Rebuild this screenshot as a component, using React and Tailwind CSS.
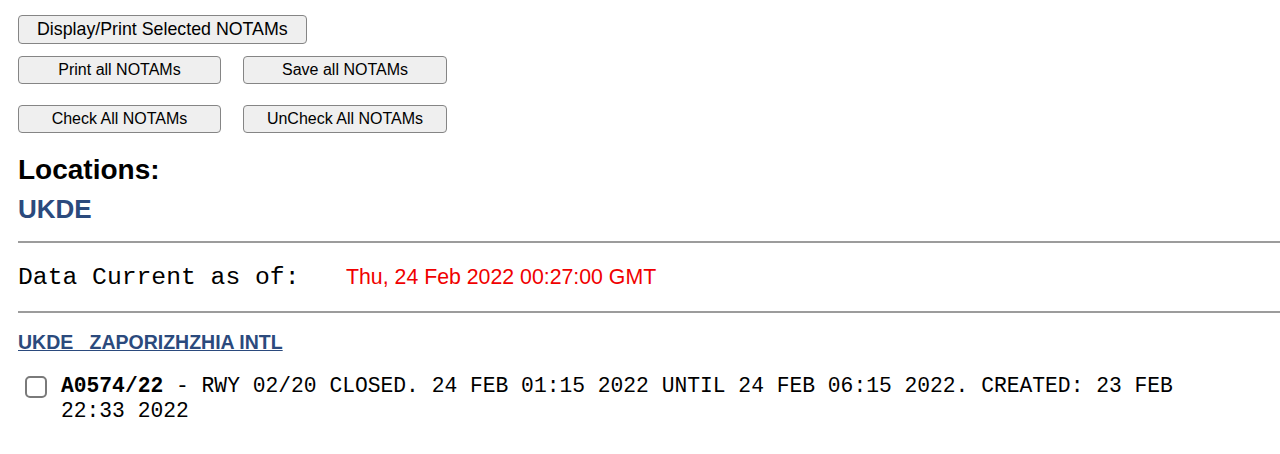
const Btn = ({ children, className = "" }) => (
  <button
    className={`h-[28px] rounded-[4px] border border-[#858585] bg-[#efefef] text-[16px] leading-none text-black ${className}`}
  >
    {children}
  </button>
);

const App = () => {
  return (
    <div className="min-h-[454px] bg-white pl-[18px] pt-[15px] font-['Liberation_Sans',Arial,sans-serif] text-black">
      {/* buttons */}
      <Btn className="h-[29px] px-[18px] text-[17.8px]">Display/Print Selected NOTAMs</Btn>
      <div className="mt-[12px] flex gap-[22px]">
        <Btn className="w-[203px]">Print all NOTAMs</Btn>
        <Btn className="w-[204px]">Save all NOTAMs</Btn>
      </div>
      <div className="mt-[21px] flex gap-[22px]">
        <Btn className="w-[203px]">Check All NOTAMs</Btn>
        <Btn className="w-[204px]">UnCheck All NOTAMs</Btn>
      </div>

      {/* locations */}
      <div className="mt-[21px] text-[28px] font-bold leading-[32px]">Locations:</div>
      <div className="mt-[7px] text-[26px] font-bold leading-[32px] text-[#2b4a7d]">UKDE</div>

      <div className="mt-[16px] h-[2px] bg-[#9c9c9c]" />

      <div className="mt-[19px] flex items-baseline">
        <span className="w-[328px] font-['Liberation_Mono','Courier_New',monospace] text-[24.7px] leading-[30px]">
          Data Current as of:
        </span>
        <span className="text-[21.3px] text-[#f00000]">Thu, 24 Feb 2022 00:27:00 GMT</span>
      </div>

      <div className="mt-[17px] h-[2px] bg-[#9c9c9c]" />

      <div className="mt-[17px]">
        <a href="#" className="text-[19.5px] font-bold leading-[24px] text-[#2b4a7d] underline">
          UKDE&nbsp;&nbsp;&nbsp;ZAPORIZHZHIA INTL
        </a>
      </div>

      <div className="mt-[18px] flex items-start">
        <span className="ml-[7px] mt-[2px] h-[22px] w-[22px] shrink-0 rounded-[5px] border-2 border-[#7a7a7a] bg-white" />
        <p className="ml-[14px] max-w-[1150px] font-['Liberation_Mono','Courier_New',monospace] text-[21.3px] leading-[25px]">
          <b>A0574/22</b> - RWY 02/20 CLOSED. 24 FEB 01:15 2022 UNTIL 24 FEB 06:15 2022. CREATED: 23 FEB 22:33 2022
        </p>
      </div>
    </div>
  );
};

export default App;
